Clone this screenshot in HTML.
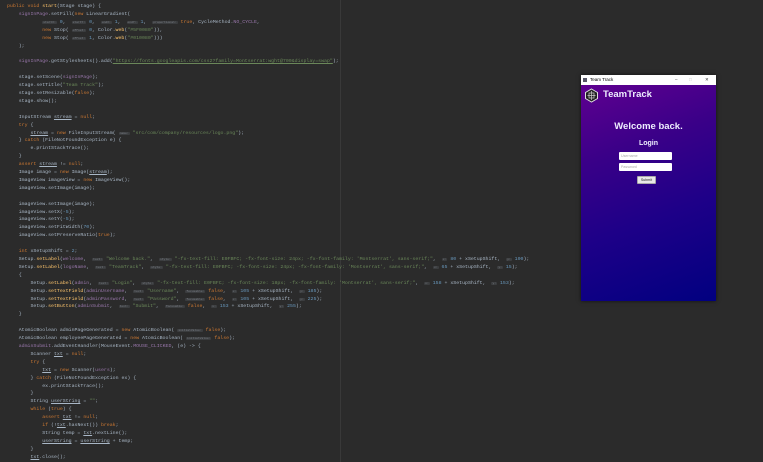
<!DOCTYPE html>
<html><head><meta charset="utf-8"><style>
html,body{margin:0;padding:0;background:#2b2b2b;width:763px;height:462px;overflow:hidden;position:relative}
.code{position:absolute;left:7px;top:3px;font-family:"Liberation Mono",monospace;font-size:4.9px;line-height:7.9px;color:#a9b7c6;white-space:pre}
.k{color:#cc7832}.s{color:#6a8759}.n{color:#6897bb}.f{color:#9876aa}.m{color:#ffc66d}
.h{background:#3b3d3f;color:#7a7e85;border-radius:1px;padding:0 1px;font-size:3px;line-height:0}
.div{position:absolute;left:340px;top:0;width:1px;height:462px;background:#393939}
.win{position:absolute;left:581px;top:75px;width:135px;height:226px;box-shadow:0 0 4px rgba(0,0,0,.6)}
.tb{height:10px;background:#fff;font-family:"Liberation Sans",sans-serif;font-size:4.5px;line-height:10px;color:#000;position:relative}
.body{position:absolute;top:10px;left:0;right:0;bottom:0;background:linear-gradient(160deg,#5f0090 0%,#3a0088 30%,#1e0088 60%,#010080 100%);font-family:"Liberation Sans",sans-serif;color:#eee}
.in{position:absolute;left:38px;width:53px;height:8px;background:#fff;border-radius:1px;font-size:3.6px;line-height:8px;color:#aaa;padding-left:2px;box-sizing:border-box}
</style></head><body>
<div class="div"></div>
<div class="code"><span class="k">public void </span><span class="m">start</span>(Stage stage) {
    <span class="f">signInPage</span>.setFill(<span class="k">new </span>LinearGradient(
            <span class="h">startX:</span> <span class="n">0</span>,  <span class="h">startY:</span> <span class="n">0</span>,  <span class="h">endX:</span> <span class="n">1</span>,  <span class="h">endY:</span> <span class="n">1</span>,  <span class="h">proportional:</span> <span class="k">true</span>, CycleMethod.<span class="f">NO_CYCLE</span>,
            <span class="k">new </span>Stop( <span class="h">offset:</span> <span class="n">0</span>, Color.<span class="m">web</span>(<span class="s">"#5F0080"</span>)),
            <span class="k">new </span>Stop( <span class="h">offset:</span> <span class="n">1</span>, Color.<span class="m">web</span>(<span class="s">"#010080"</span>)))
    );

    <span class="f">signInPage</span>.getStylesheets().add(<span class="s" style="text-decoration:underline">"https://fonts.googleapis.com/css2?family=Montserrat:wght@700&amp;display=swap"</span>);

    stage.setScene(<span class="f">signInPage</span>);
    stage.setTitle(<span class="s">"Team Track"</span>);
    stage.setResizable(<span class="k">false</span>);
    stage.show();

    InputStream <u>stream</u> = <span class="k">null</span>;
    <span class="k">try </span>{
        <u>stream</u> = <span class="k">new </span>FileInputStream( <span class="h">name:</span> <span class="s">"src/com/company/resources/logo.png"</span>);
    } <span class="k">catch </span>(FileNotFoundException e) {
        e.printStackTrace();
    }
    <span class="k">assert </span><u>stream</u> != <span class="k">null</span>;
    Image image = <span class="k">new </span>Image(<u>stream</u>);
    ImageView imageView = <span class="k">new </span>ImageView();
    imageView.setImage(image);

    imageView.setImage(image);
    imageView.setX(<span class="n">-5</span>);
    imageView.setY(<span class="n">-5</span>);
    imageView.setFitWidth(<span class="n">70</span>);
    imageView.setPreserveRatio(<span class="k">true</span>);

    <span class="k">int </span>xSetupShift = <span class="n">2</span>;
    Setup.<span class="m">setLabel</span>(<span class="f">welcome</span>,  <span class="h">text:</span> <span class="s">"Welcome back."</span>,  <span class="h">style:</span> <span class="s">"-fx-text-fill: E0FBFC; -fx-font-size: 24px; -fx-font-family: 'Montserrat', sans-serif;"</span>,  <span class="h">x:</span> <span class="n">80</span> + xSetupShift,  <span class="h">y:</span> <span class="n">100</span>);
    Setup.<span class="m">setLabel</span>(<span class="f">logoName</span>,  <span class="h">text:</span> <span class="s">"TeamTrack"</span>,  <span class="h">style:</span> <span class="s">"-fx-text-fill: E0FBFC; -fx-font-size: 24px; -fx-font-family: 'Montserrat', sans-serif;"</span>,  <span class="h">x:</span> <span class="n">65</span> + xSetupShift,  <span class="h">y:</span> <span class="n">15</span>);
    {
        Setup.<span class="m">setLabel</span>(<span class="f">admin</span>,  <span class="h">text:</span> <span class="s">"Login"</span>,  <span class="h">style:</span> <span class="s">"-fx-text-fill: E0FBFC; -fx-font-size: 18px; -fx-font-family: 'Montserrat', sans-serif;"</span>,  <span class="h">x:</span> <span class="n">158</span> + xSetupShift,  <span class="h">y:</span> <span class="n">153</span>);
        Setup.<span class="m">setTextField</span>(<span class="f">adminUsername</span>,  <span class="h">text:</span> <span class="s">"Username"</span>,  <span class="h">focusable:</span> <span class="k">false</span>,  <span class="h">x:</span> <span class="n">105</span> + xSetupShift,  <span class="h">y:</span> <span class="n">185</span>);
        Setup.<span class="m">setTextField</span>(<span class="f">adminPassword</span>,  <span class="h">text:</span> <span class="s">"Password"</span>,  <span class="h">focusable:</span> <span class="k">false</span>,  <span class="h">x:</span> <span class="n">105</span> + xSetupShift,  <span class="h">y:</span> <span class="n">225</span>);
        Setup.<span class="m">setButton</span>(<span class="f">adminSubmit</span>,  <span class="h">text:</span> <span class="s">"Submit"</span>,  <span class="h">focusable:</span> <span class="k">false</span>,  <span class="h">x:</span> <span class="n">153</span> + xSetupShift,  <span class="h">y:</span> <span class="n">255</span>);
    }

    AtomicBoolean adminPageGenerated = <span class="k">new </span>AtomicBoolean( <span class="h">initialValue:</span> <span class="k">false</span>);
    AtomicBoolean employeePageGenerated = <span class="k">new </span>AtomicBoolean( <span class="h">initialValue:</span> <span class="k">false</span>);
    <span class="f">adminSubmit</span>.addEventHandler(MouseEvent.<span class="f">MOUSE_CLICKED</span>, (e) -&gt; {
        Scanner <u>txt</u> = <span class="k">null</span>;
        <span class="k">try </span>{
            <u>txt</u> = <span class="k">new </span>Scanner(<span class="f">users</span>);
        } <span class="k">catch </span>(FileNotFoundException ex) {
            ex.printStackTrace();
        }
        String <u>userString</u> = <span class="s">""</span>;
        <span class="k">while </span>(<span class="k">true</span>) {
            <span class="k">assert </span><u>txt</u> != <span class="k">null</span>;
            <span class="k">if </span>(!<u>txt</u>.hasNext()) <span class="k">break</span>;
            String temp = <u>txt</u>.nextLine();
            <u>userString</u> = <u>userString</u> + temp;
        }
        <u>txt</u>.close();</div>

<div class="win">
  <div class="tb"><span style="position:absolute;left:2px;top:3px;width:4px;height:4px;background:#556;"></span><span style="position:absolute;left:9px">Team Track</span>
    <span style="position:absolute;left:94px;color:#333">–</span><span style="position:absolute;left:108px;color:#bbb">□</span><span style="position:absolute;left:124px;color:#333">✕</span></div>
  <div class="body">
    <svg style="position:absolute;left:3px;top:3px" width="15" height="15" viewBox="0 0 15 15"><polygon points="7.5,1 13.5,4.5 13.5,10.5 7.5,14 1.5,10.5 1.5,4.5" fill="#222" stroke="#ddd" stroke-width="1"/><path d="M5 5h5v5H5zM7.5 3v9M3.5 7.5h8" stroke="#ccc" stroke-width=".7" fill="none"/></svg>
    <div style="position:absolute;left:22px;top:4px;font-size:9.5px;font-weight:bold;color:#eef">TeamTrack</div>
    <div style="position:absolute;left:0;right:0;top:36px;text-align:center;font-size:9.5px;font-weight:bold;color:#eef">Welcome back.</div>
    <div style="position:absolute;left:0;right:0;top:55px;text-align:center;font-size:7px;font-weight:bold;color:#eef">Login</div>
    <div class="in" style="top:67px">Username</div>
    <div class="in" style="top:78px">Password</div>
    <div style="position:absolute;left:56px;top:91px;width:19px;height:8px;background:#e8e8e8;border:1px solid #aaa;border-radius:1px;box-sizing:border-box;font-size:3.6px;line-height:6px;text-align:center;color:#222">Submit</div>
  </div>
</div>
</body></html>
